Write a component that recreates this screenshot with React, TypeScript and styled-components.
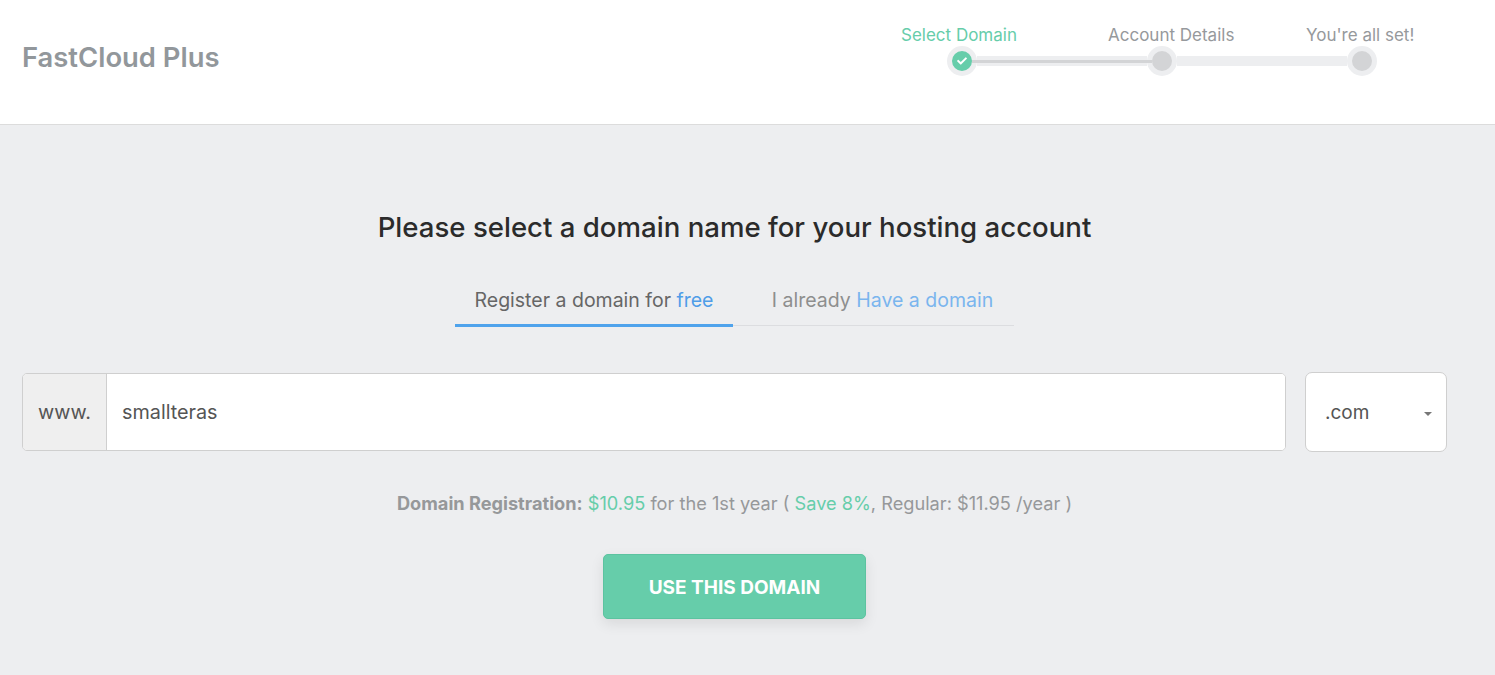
import styled, { createGlobalStyle } from "styled-components";
import { FaCheck } from "react-icons/fa";

const GlobalStyle = createGlobalStyle`
  * {
    box-sizing: border-box;
  }
  html,
  body {
    margin: 0;
    padding: 0;
    height: 100%;
    overflow: hidden;
    background: #edeef0;
    font-family: Inter, Roboto, "Liberation Sans", sans-serif;
  }
`;

function App() {
  return (
    <>
      <GlobalStyle />
      <Header>
        <Logo>FastCloud Plus</Logo>
        <Stepper>
          <StepLabels>
            <StepLabel $done>Select Domain</StepLabel>
            <StepLabel>Account Details</StepLabel>
            <StepLabel>You're all set!</StepLabel>
          </StepLabels>
          <StepTrack>
            <StepDot $done>
              <FaCheck size={10} color="#fff" />
            </StepDot>
            <StepLine $done />
            <StepDot />
            <StepLine />
            <StepDot />
          </StepTrack>
        </Stepper>
      </Header>
      <Main>
        <Heading>Please select a domain name for your hosting account</Heading>
        <Tabs>
          <Tab $active>
            Register a domain for <TabAccent $active>free</TabAccent>
          </Tab>
          <Tab>
            I already <TabAccent>Have a domain</TabAccent>
          </Tab>
        </Tabs>
        <DomainRow>
          <InputGroup>
            <Prefix>www.</Prefix>
            <DomainInput value="smallteras" readOnly />
          </InputGroup>
          <TldSelect>
            .com
            <Caret />
          </TldSelect>
        </DomainRow>
        <PriceLine>
          <b>Domain Registration:</b> <Green>$10.95</Green> for the 1st year ({" "}
          <Green>Save 8%</Green>, Regular: $11.95 /year )
        </PriceLine>
        <SubmitButton>USE THIS DOMAIN</SubmitButton>
      </Main>
    </>
  );
}

export default App;

const Header = styled.header`
  display: flex;
  justify-content: space-between;
  height: 125px;
  padding: 0 82px 0 22px;
  background: #fff;
  border-bottom: 1px solid #dcdcdc;
`;

const Logo = styled.h1`
  margin: 41px 0 0;
  font-size: 27.4px;
  line-height: 32px;
  font-weight: 600;
  color: #92979b;
`;

const Stepper = styled.div`
  display: flex;
  flex-direction: column;
  width: 512px;
  padding-top: 24px;
`;

const StepLabels = styled.div`
  display: grid;
  grid-template-columns: 207px 198px 107px;
  height: 22px;
  line-height: 22px;
`;

const StepLabel = styled.span<{ $done?: boolean }>`
  font-size: 17px;
  white-space: nowrap;
  color: ${(p) => (p.$done ? "#66cdaa" : "#96999c")};
`;

const StepTrack = styled.div`
  display: flex;
  align-items: center;
  margin-left: 46px;
`;

const StepDot = styled.span<{ $done?: boolean }>`
  display: flex;
  align-items: center;
  justify-content: center;
  flex: none;
  width: 20px;
  height: 20px;
  border-radius: 50%;
  box-sizing: content-box;
  border: 5px solid #edeef0;
  background: ${(p) => (p.$done ? "#66cdaa" : "#d3d4d6")};
`;

const StepLine = styled.span<{ $done?: boolean }>`
  display: flex;
  align-items: center;
  flex: none;
  width: 170px;
  height: 10px;
  background: #edeef0;
  &::before {
    content: "";
    position: relative;
    flex: none;
    width: 180px;
    height: 3px;
    margin: 0 -5px;
    background: ${(p) => (p.$done ? "#d3d4d6" : "transparent")};
  }
`;

const Main = styled.main`
  display: flex;
  flex-direction: column;
  align-items: center;
  padding: 0 48px 0 22px;
  background: #edeef0;
`;

const Heading = styled.h2`
  margin: 85px 0 0;
  font-size: 27.6px;
  line-height: 34px;
  font-weight: 500;
  white-space: nowrap;
  color: #2b2b2b;
`;

const Tabs = styled.div`
  display: flex;
  width: 559px;
  margin-top: 35px;
  border-bottom: 1px solid #dcdde0;
`;

const Tab = styled.div<{ $active?: boolean }>`
  flex: ${(p) => (p.$active ? "0 0 278px" : "1")};
  height: ${(p) => (p.$active ? "48px" : "46px")};
  line-height: 42px;
  margin-bottom: ${(p) => (p.$active ? "-2px" : "0")};
  padding-left: ${(p) => (p.$active ? "0" : "18px")};
  border-bottom: ${(p) => (p.$active ? "3px solid #4fa3ec" : "none")};
  text-align: center;
  font-size: 19.5px;
  white-space: nowrap;
  color: ${(p) => (p.$active ? "#666" : "#8e8e8e")};
`;

const TabAccent = styled.span<{ $active?: boolean }>`
  color: ${(p) => (p.$active ? "#4f9de8" : "#7ab5ee")};
`;

const DomainRow = styled.div`
  display: flex;
  align-items: center;
  justify-content: space-between;
  align-self: stretch;
  margin-top: 46px;
`;

const InputGroup = styled.div`
  display: flex;
  width: 1264px;
  height: 78px;
  border: 1px solid #cfcfcf;
  border-radius: 5px;
  overflow: hidden;
  background: #fff;
`;

const Prefix = styled.div`
  display: flex;
  align-items: center;
  justify-content: center;
  flex: none;
  width: 84px;
  background: #efefef;
  border-right: 1px solid #cfcfcf;
  font-size: 19.8px;
  color: #555;
`;

const DomainInput = styled.input`
  flex: 1;
  border: none;
  outline: none;
  padding: 0 15px;
  font-family: inherit;
  font-size: 19.8px;
  color: #555;
  background: #fff;
`;

const TldSelect = styled.div`
  display: flex;
  align-items: center;
  justify-content: space-between;
  width: 142px;
  height: 80px;
  padding: 0 14px 0 19px;
  border: 1px solid #cfcfcf;
  border-radius: 7px;
  background: #fff;
  font-size: 19px;
  color: #555;
`;

const Caret = styled.span`
  width: 0;
  height: 0;
  margin-top: 3px;
  border-left: 4px solid transparent;
  border-right: 4px solid transparent;
  border-top: 4px solid #777;
`;

const PriceLine = styled.p`
  margin: 39px 0 0;
  font-size: 18.2px;
  line-height: 24px;
  color: #96989a;
  white-space: nowrap;
`;

const Green = styled.span`
  color: #66cdaa;
`;

const SubmitButton = styled.button`
  width: 263px;
  height: 65px;
  margin-top: 39px;
  padding: 1px 0 0;
  border: 1px solid #5cc3a0;
  border-radius: 5px;
  background: #66cdaa;
  box-shadow: 0 5px 14px rgba(0, 0, 0, 0.09);
  font-family: inherit;
  font-size: 19px;
  font-weight: 700;
  color: #fff;
`;
